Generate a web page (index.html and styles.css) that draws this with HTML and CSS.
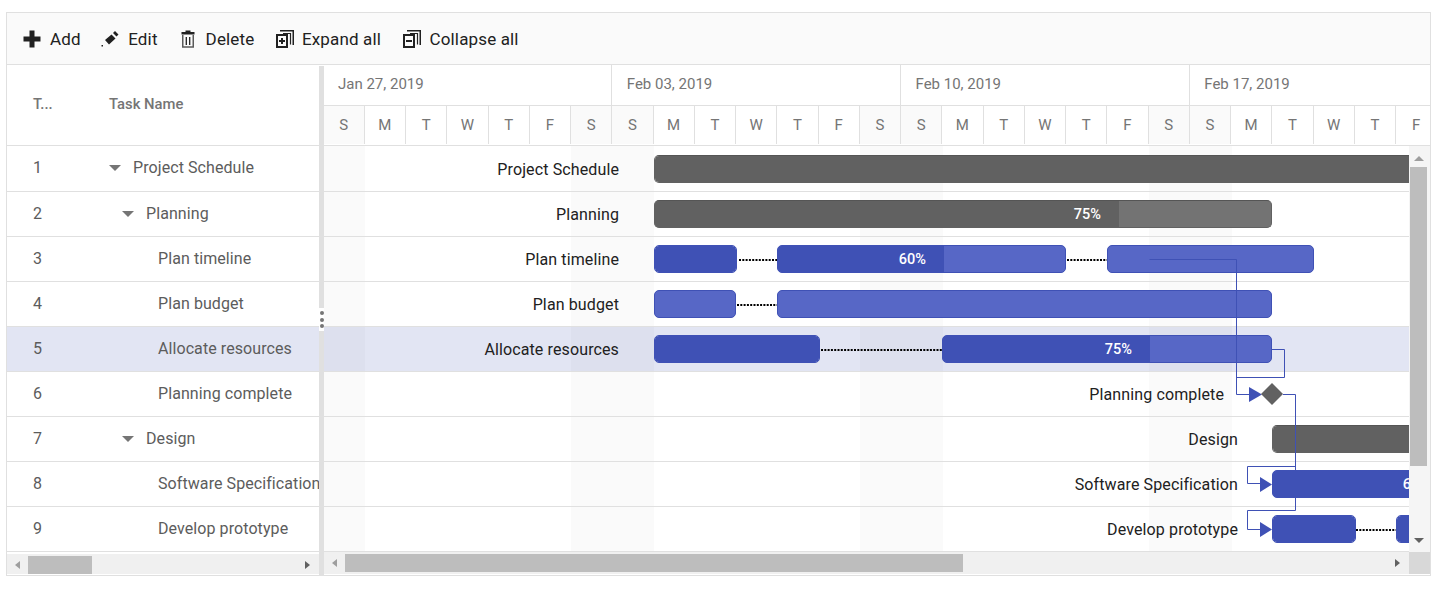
FILE: index.html
```html
<!DOCTYPE html>
<html>
<head>
	<title>Gantt</title>
	<link rel="stylesheet" href="styles.css">
</head>
<body>
	<div class="gantt">
		<div class="toolbar">
			<div class="tool tool-add">
				<svg width="18" height="18" viewBox="0 0 18 18"><path d="M6.500 0.500h5v6h6v5h-6v6h-5v-6h-6v-5h6z" fill="#212121"/></svg>
				<span>Add</span>
			</div>
			<div class="tool tool-edit">
				<svg width="18" height="18" viewBox="0 0 18 18"><path d="M4 10L10.500 4.500L14.500 8.500L8 14.500Z M12 3L14 1L17.500 4.500L15.500 6.500Z" fill="#212121"/><path d="M0.500 15h1.500v1.500h-1.500z" fill="#212121"/></svg>
				<span>Edit</span>
			</div>
			<div class="tool tool-delete">
				<svg width="14" height="18" viewBox="0 0 14 18"><path d="M4.500 0.500h5v1.500h4v2.500h-13v-2.500h4z" fill="#212121"/><path d="M1.750 5v12h10.500v-12" fill="none" stroke="#5a5a5a" stroke-width="1.500"/><path d="M5.300 7v8M8.700 7v8" stroke="#212121" stroke-width="1.300"/></svg>
				<span>Delete</span>
			</div>
			<div class="tool tool-expand">
				<svg width="18" height="18" viewBox="0 0 18 18"><path d="M4 0.750h13.250v14.250" fill="none" stroke="#212121" stroke-width="1.500"/><path d="M7 3.500h7.500v11" fill="none" stroke="#212121" stroke-width="1.200"/><rect x="1" y="5" width="10" height="12" fill="#fafafa" stroke="#212121" stroke-width="2"/><path d="M3 11h6M6 8v6" stroke="#212121" stroke-width="2"/></svg>
				<span>Expand all</span>
			</div>
			<div class="tool tool-collapse">
				<svg width="18" height="18" viewBox="0 0 18 18"><path d="M4 0.750h13.250v14.250" fill="none" stroke="#212121" stroke-width="1.500"/><path d="M7 3.500h7.500v11" fill="none" stroke="#212121" stroke-width="1.200"/><rect x="1" y="5" width="10" height="12" fill="#fafafa" stroke="#212121" stroke-width="2"/><path d="M3 11h6" stroke="#212121" stroke-width="2"/></svg>
				<span>Collapse all</span>
			</div>
		</div>

		<div class="main">
			<div class="tree">
				<div class="tree-head">
					<div class="col-id">T...</div>
					<div class="col-name">Task Name</div>
				</div>
				<div class="tree-row first">
					<div class="col-id">1</div>
					<div class="col-name level-0"><i class="caret"></i>Project Schedule</div>
				</div>
				<div class="tree-row">
					<div class="col-id">2</div>
					<div class="col-name level-1"><i class="caret"></i>Planning</div>
				</div>
				<div class="tree-row">
					<div class="col-id">3</div>
					<div class="col-name level-2">Plan timeline</div>
				</div>
				<div class="tree-row">
					<div class="col-id">4</div>
					<div class="col-name level-2">Plan budget</div>
				</div>
				<div class="tree-row selected">
					<div class="col-id">5</div>
					<div class="col-name level-2">Allocate resources</div>
				</div>
				<div class="tree-row">
					<div class="col-id">6</div>
					<div class="col-name level-2">Planning complete</div>
				</div>
				<div class="tree-row">
					<div class="col-id">7</div>
					<div class="col-name level-1"><i class="caret"></i>Design</div>
				</div>
				<div class="tree-row">
					<div class="col-id">8</div>
					<div class="col-name level-2">Software Specification</div>
				</div>
				<div class="tree-row">
					<div class="col-id">9</div>
					<div class="col-name level-2">Develop prototype</div>
				</div>
				<div class="hbar hbar-tree">
					<i class="arrow-left"></i>
					<div class="thumb thumb-tree"></div>
					<i class="arrow-right"></i>
				</div>
			</div>

			<div class="splitter">
				<div class="grip"><b></b><b></b><b></b></div>
			</div>

			<div class="timeline">
				<div class="weeks">
					<div class="week">Jan 27, 2019</div>
					<div class="week">Feb 03, 2019</div>
					<div class="week">Feb 10, 2019</div>
					<div class="week">Feb 17, 2019</div>
				</div>
				<div class="days">
					<div class="day off">S</div><div class="day">M</div><div class="day">T</div><div class="day">W</div><div class="day">T</div><div class="day">F</div><div class="day off">S</div>
					<div class="day off">S</div><div class="day">M</div><div class="day">T</div><div class="day">W</div><div class="day">T</div><div class="day">F</div><div class="day off">S</div>
					<div class="day off">S</div><div class="day">M</div><div class="day">T</div><div class="day">W</div><div class="day">T</div><div class="day">F</div><div class="day off">S</div>
					<div class="day off">S</div><div class="day">M</div><div class="day">T</div><div class="day">W</div><div class="day">T</div><div class="day">F</div><div class="day off">S</div>
				</div>

				<div class="chart-wrap">
					<div class="chart">
						<div class="chart-row first">
							<span class="label" style="right:790px">Project Schedule</span>
							<div class="bar parent" style="left:330px;width:1000px"><div class="progress" style="width:100%"></div></div>
						</div>
						<div class="chart-row">
							<span class="label" style="right:790px">Planning</span>
							<div class="bar parent" style="left:330px;width:618px"><div class="progress" style="width:464px">75%</div></div>
						</div>
						<div class="chart-row">
							<span class="label" style="right:790px">Plan timeline</span>
							<div class="bar task" style="left:330px;width:83px"><div class="progress" style="width:100%"></div></div>
							<div class="bar task" style="left:453px;width:289px"><div class="progress" style="width:166px">60%</div></div>
							<div class="bar task" style="left:783px;width:207px"></div>
						</div>
						<div class="chart-row">
							<span class="label" style="right:790px">Plan budget</span>
							<div class="bar task" style="left:330px;width:82px"></div>
							<div class="bar task" style="left:453px;width:495px"></div>
						</div>
						<div class="chart-row selected">
							<span class="label" style="right:790px">Allocate resources</span>
							<div class="bar task" style="left:330px;width:166px"><div class="progress" style="width:100%"></div></div>
							<div class="bar task" style="left:618px;width:330px"><div class="progress" style="width:207px">75%</div></div>
						</div>
						<div class="chart-row">
							<span class="label" style="right:185px">Planning complete</span>
						</div>
						<div class="chart-row">
							<span class="label" style="right:171px">Design</span>
							<div class="bar parent" style="left:948px;width:400px"><div class="progress" style="width:100%"></div></div>
						</div>
						<div class="chart-row">
							<span class="label" style="right:171px">Software Specification</span>
							<div class="bar task" style="left:948px;width:300px"><div class="progress" style="width:175px">60%</div></div>
						</div>
						<div class="chart-row">
							<span class="label" style="right:171px">Develop prototype</span>
							<div class="bar task" style="left:948px;width:84px"><div class="progress" style="width:100%"></div></div>
							<div class="bar task" style="left:1072px;width:100px"><div class="progress" style="width:100%"></div></div>
						</div>

						<!-- viewBox uses page coordinates so the links read like the reference -->
						<svg class="links" width="1085" height="406" viewBox="324 146 1085 406">
							<path class="dots" d="M739 260H777M1067 260H1107M737 305H777M821 350H942M1356 530H1396"/>
							<path class="link" d="M1149.500 259.500H1236.500V394.500H1250"/>
							<path class="link" d="M1272 349.500H1284.500V377.500H1236.500"/>
							<path class="link" d="M1283 394.500H1295.500V510.500H1247.500V529.500H1261"/>
							<path class="link" d="M1295.500 466.500H1247.500V483.500H1261"/>
							<path class="head" d="M1249 387L1262 394.500L1249 402Z"/>
							<path class="head" d="M1260 477L1272 484.500L1260 492Z"/>
							<path class="head" d="M1260 522L1272 529.500L1260 537Z"/>
							<path class="mile" d="M1272 383L1283 394L1272 405L1261 394Z"/>
						</svg>
					</div>
					<div class="vbar">
						<i class="arrow-up"></i>
						<div class="thumb thumb-v"></div>
						<i class="arrow-down"></i>
					</div>
				</div>

				<div class="bottom">
					<div class="hbar hbar-chart">
						<i class="arrow-left"></i>
						<div class="thumb thumb-chart"></div>
						<i class="arrow-right"></i>
					</div>
					<div class="corner"></div>
				</div>
			</div>
		</div>
	</div>
</body>
</html>
```

FILE: styles.css
```css
body {
	margin: 0;
	font-family: Roboto, "Liberation Sans", sans-serif;
	color: #212121;
	background-color: white;
}
.gantt {
	box-sizing: border-box;
	width: 1425px;
	height: 564px;
	margin: 12px 0 0 6px;
	border: 1px solid #e0e0e0;
	overflow: hidden;
}

/* toolbar */
.toolbar {
	box-sizing: border-box;
	height: 52px;
	display: flex;
	align-items: center;
	padding-left: 16px;
	background-color: #fafafa;
	border-bottom: 1px solid #e0e0e0;
	font-size: 17px;
	letter-spacing: 0.150px;
}
.tool {
	display: flex;
	align-items: center;
	gap: 9px;
	margin-right: 21.500px;
}
.tool-add {
	margin-right: 20.500px;
}
.tool-edit {
	margin-right: 23px;
}
.tool-delete {
	gap: 11px;
}
.tool-expand {
	gap: 8px;
}

/* left grid */
.main {
	display: flex;
	height: 510px;
}
.tree {
	width: 312px;
	flex: none;
	font-size: 16px;
	letter-spacing: 0.080px;
	color: #5c5c5c;
}
.tree-head {
	box-sizing: border-box;
	height: 81px;
	padding-bottom: 2px;
	display: flex;
	align-items: center;
	border-bottom: 1px solid #e0e0e0;
	font-size: 14.800px;
	font-weight: 500;
	letter-spacing: 0;
	color: #757575;
}
.tree-row {
	box-sizing: border-box;
	height: 45px;
	padding-bottom: 1px;
	display: flex;
	align-items: center;
	border-bottom: 1px solid #e0e0e0;
	overflow: hidden;
}
.tree-row.first {
	height: 46px;
	padding-bottom: 3px;
}
.selected {
	background-color: rgba(50, 70, 170, 0.14);
}
.col-id {
	width: 83px;
	flex: none;
	box-sizing: border-box;
	padding-left: 26px;
}
.col-name {
	flex: 1;
	min-width: 0;
	padding-left: 19px;
	white-space: nowrap;
	overflow: hidden;
}
.level-0 {
	padding-left: 19px;
}
.level-1 {
	padding-left: 32px;
}
.level-2 {
	padding-left: 68px;
}
.caret {
	display: inline-block;
	margin-right: 12px;
	vertical-align: 2px;
	border-left: 6px solid transparent;
	border-right: 6px solid transparent;
	border-top: 6px solid #757575;
}

/* splitter */
.splitter {
	width: 5px;
	flex: none;
	position: relative;
	margin-top: 1px;
	background-color: #e0e0e0;
}
.grip {
	position: absolute;
	left: 0;
	top: 242px;
	width: 5px;
	height: 23px;
	display: flex;
	flex-direction: column;
	align-items: center;
	justify-content: center;
	gap: 2.500px;
	background-color: white;
}
.grip b {
	width: 4px;
	height: 4px;
	border-radius: 50%;
	background-color: #757575;
}

/* timeline header */
.timeline {
	width: 1106px;
	flex: none;
	overflow: hidden;
}
.weeks,
.days {
	display: flex;
	color: #757575;
	font-size: 15px;
}
.weeks {
	box-sizing: border-box;
	height: 41px;
	margin-left: -0.500px;
	border-bottom: 1px solid #e0e0e0;
}
.week {
	box-sizing: border-box;
	width: 288.750px;
	flex: none;
	padding: 10px 0 0 14.500px;
	border-right: 1px solid #e0e0e0;
}
.days {
	box-sizing: border-box;
	height: 40px;
	margin-left: -0.500px;
	padding-bottom: 1px;
	border-bottom: 1px solid #e0e0e0;
}
.day {
	box-sizing: border-box;
	width: 41.250px;
	flex: none;
	display: flex;
	align-items: center;
	justify-content: center;
	border-right: 1px solid #e0e0e0;
}
.day.off {
	background-color: #fafafa;
}

/* chart */
.chart-wrap {
	display: flex;
	height: 406px;
}
.chart {
	width: 1085px;
	flex: none;
	position: relative;
	overflow: hidden;
	background: repeating-linear-gradient(90deg,
		#fafafa 0, #fafafa 41.250px,
		white 41.250px, white 247.500px,
		#fafafa 247.500px, #fafafa 288.750px);
}
.chart-row {
	box-sizing: border-box;
	height: 45px;
	position: relative;
	border-bottom: 1px solid #e0e0e0;
}
.chart-row.first {
	height: 46px;
}
.chart-row.first .bar {
	top: 9px;
}
.label {
	position: absolute;
	top: 0;
	line-height: 46px;
	font-size: 16px;
	letter-spacing: 0.120px;
	white-space: nowrap;
}
.chart-row.first .label {
	line-height: 48px;
}
.bar {
	position: absolute;
	top: 8px;
	box-sizing: border-box;
	height: 28px;
	border-radius: 5px;
	border: 1px solid;
	overflow: hidden;
}
.task {
	background-color: #5767c6;
	border-color: #3f51b5;
}
.task .progress {
	background-color: #3f51b5;
}
.parent {
	background-color: #737373;
	border-color: #616161;
	border-top-color: #555;
}
.parent .progress {
	background-color: #616161;
}
.progress {
	box-sizing: border-box;
	height: 100%;
	padding-right: 18px;
	text-align: right;
	line-height: 27px;
	font-size: 14.500px;
	font-weight: 500;
	color: white;
}
.links {
	position: absolute;
	left: 0;
	top: 0;
}
.link {
	fill: none;
	stroke: #3f51b5;
	stroke-width: 1;
}
.dots {
	fill: none;
	stroke: black;
	stroke-width: 2;
	stroke-dasharray: 2 1.300;
}
.head {
	fill: #3f51b5;
}
.mile {
	fill: #616161;
}

/* scrollbars */
.vbar {
	width: 21px;
	flex: none;
	display: flex;
	flex-direction: column;
	background-color: #f5f5f5;
}
.thumb {
	background-color: #bdbdbd;
	flex: none;
}
.thumb-v {
	width: 17px;
	height: 299px;
	margin: 6px 0 0 1px;
}
.bottom {
	display: flex;
	height: 22px;
}
.hbar {
	display: flex;
	background-color: #f0f0f0;
}
.hbar-tree {
	height: 20px;
	margin-top: 2px;
	padding: 2px 8px 0 8px;
	box-sizing: border-box;
}
.hbar-chart {
	width: 1085px;
	flex: none;
	padding: 2px 8px 2px 8px;
	box-sizing: border-box;
}
.thumb-tree {
	width: 64px;
	margin-left: 8px;
}
.thumb-chart {
	width: 618px;
	margin-left: 8px;
}
.corner {
	flex: 1;
	background-color: #d8d8d8;
}
.arrow-left,
.arrow-right {
	align-self: center;
	flex: none;
	border-top: 4px solid transparent;
	border-bottom: 4px solid transparent;
}
.arrow-left {
	border-right: 5px solid #9e9e9e;
}
.arrow-right {
	margin-left: auto;
	margin-right: 1px;
	border-left: 5px solid #616161;
}
.arrow-up,
.arrow-down {
	align-self: center;
	flex: none;
	margin-left: -2px;
	border-left: 5px solid transparent;
	border-right: 5px solid transparent;
}
.arrow-up {
	margin-top: 10px;
	border-bottom: 5px solid #9e9e9e;
}
.arrow-down {
	margin-top: auto;
	margin-bottom: 9px;
	border-top: 5px solid #616161;
}
```
